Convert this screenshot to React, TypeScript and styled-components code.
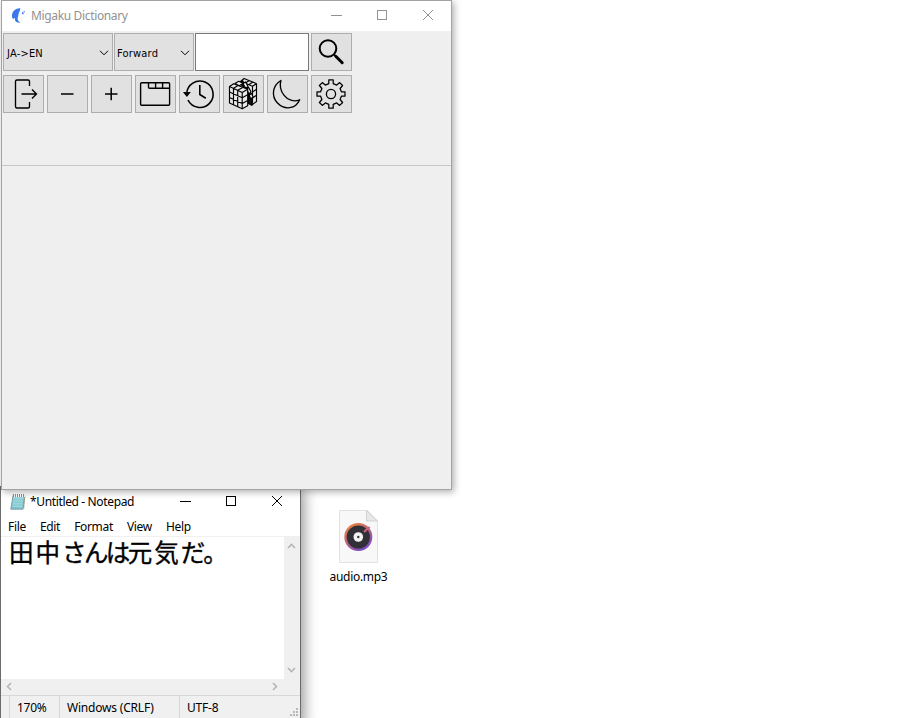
import React from "react";
import styled, { createGlobalStyle } from "styled-components";

const GlobalStyle = createGlobalStyle`
  * { box-sizing: border-box; }
  body { margin: 0; background: #fff; overflow: hidden; }
`;

const Desktop = styled.main`
  position: relative;
  width: 916px;
  height: 718px;
  overflow: hidden;
  background: #fff;
  color: #000;
  font-family: "Noto Sans", "Noto Sans CJK JP", sans-serif;
  font-size: 12px;
`;

const DictionaryWindow = styled.section`
  position: absolute;
  left: 1px;
  top: 0;
  z-index: 2;
  width: 451px;
  height: 490px;
  display: flex;
  flex-direction: column;
  border: 1px solid #a3a3a3;
  background: #efefef;
  box-shadow: 2px 2px 7px rgba(0, 0, 0, 0.32);
`;

const NotepadWindow = styled.section`
  position: absolute;
  left: 0;
  top: 486px;
  z-index: 1;
  width: 301px;
  height: 240px;
  display: flex;
  flex-direction: column;
  border: 1px solid #6b6b6b;
  background: #fff;
  box-shadow: 3px 3px 13px rgba(0, 0, 0, 0.42);
`;

const TitleBar = styled.header<{ $height: number; $color: string }>`
  flex: none;
  display: flex;
  align-items: center;
  height: ${(p) => p.$height}px;
  padding-left: 9px;
  background: #fff;
  color: ${(p) => p.$color};
`;

const Label = styled.span<{ $spacing?: number; $left?: number }>`
  margin-left: ${(p) => p.$left ?? 0}px;
  letter-spacing: ${(p) => p.$spacing ?? 0}px;
  line-height: 16px;
  white-space: pre;
`;

const Controls = styled.div`
  margin-left: auto;
  margin-right: 17px;
  padding-bottom: 2px;
  display: flex;
  gap: 34px;
`;

const Icon = styled.svg`
  display: block;
  flex: none;
  fill: none;
  stroke: currentColor;
`;

const Toolbar = styled.div`
  flex: none;
  height: 135px;
  padding: 2px 1px;
  display: flex;
  flex-direction: column;
  gap: 4px;
  border-bottom: 1px solid #c6c6c6;
`;

const ToolRow = styled.div<{ $gap: number }>`
  display: flex;
  height: 38px;
  gap: ${(p) => p.$gap}px;
`;

const Combo = styled.button<{ $width: number; $inset: number }>`
  display: flex;
  align-items: center;
  justify-content: space-between;
  width: ${(p) => p.$width}px;
  padding: 2px 3px 0 ${(p) => p.$inset}px;
  border: 1px solid #adadad;
  background: #e1e1e1;
  color: #000;
  font: 11px "DejaVu Sans Condensed", "DejaVu Sans", sans-serif;
  font-stretch: condensed;
  letter-spacing: 0.2px;
`;

const SearchInput = styled.input`
  width: 114px;
  margin-right: 1px;
  border: 1px solid #7a7a7a;
  border-radius: 0;
  background: #fff;
  outline: none;
`;

const ToolButton = styled.button`
  width: 41px;
  height: 38px;
  padding: 0;
  border: 1px solid #adadad;
  background: #e1e1e1;
  color: #000;
`;

const MenuBar = styled.nav`
  flex: none;
  display: flex;
  height: 21px;
  gap: 14px;
  padding: 3px 0 0 7px;
  border-bottom: 1px solid #f0f0f0;
`;

const Editor = styled.div`
  flex: none;
  display: flex;
  height: 142px;
`;

const Document = styled.div`
  flex: 1;
  padding: 0 0 0 8px;
  font-family: "Noto Sans CJK JP", sans-serif;
  font-size: 24.5px;
  line-height: 30px;
  white-space: nowrap;
  -webkit-text-stroke: 0.35px #000;
`;

const Glyphs = styled.span<{ $spacing: number }>`
  letter-spacing: ${(p) => p.$spacing}px;
`;

const VerticalScroll = styled.div`
  width: 16px;
  display: flex;
  flex-direction: column;
  justify-content: space-between;
  padding: 6px 0 6px 3px;
  background: #f0f0f0;
  color: #b5b5b5;
`;

const HorizontalScroll = styled.div`
  flex: none;
  height: 16px;
  display: flex;
  align-items: center;
  justify-content: space-between;
  padding: 0 22px 1px 5px;
  background: #f0f0f0;
  color: #b5b5b5;
`;

const StatusBar = styled.footer`
  flex: none;
  height: 24px;
  display: flex;
  background: #f0f0f0;
  border-top: 1px solid #d7d7d7;
`;

const StatusCell = styled.div<{ $width?: number }>`
  width: ${(p) => (p.$width ? `${p.$width}px` : "auto")};
  flex: ${(p) => (p.$width ? "none" : "1")};
  display: flex;
  align-items: center;
  justify-content: space-between;
  padding-left: 7px;
  border-left: 1px solid #d7d7d7;
`;

const StatusInset = styled.div`
  width: 8px;
`;

const DesktopFile = styled.div`
  position: absolute;
  left: 318px;
  top: 510px;
  width: 81px;
  display: flex;
  flex-direction: column;
  align-items: center;
  gap: 5px;
`;

function WindowControls() {
  return (
    <Controls>
      <Icon width="12" height="12"><path d="M1 6.5h11" /></Icon>
      <Icon width="12" height="12"><rect x="1.5" y="1.5" width="9" height="9" /></Icon>
      <Icon width="12" height="12"><path d="m1 1 10 10M11 1 1 11" /></Icon>
    </Controls>
  );
}

function Chevron({ d, w = 10, h = 6, stroke = 1 }: { d: string; w?: number; h?: number; stroke?: number }) {
  return <Icon width={w} height={h} strokeWidth={stroke}><path d={d} /></Icon>;
}

function ToolIcon({ children }: { children: React.ReactNode }) {
  return <Icon width="39" height="36" viewBox="1 1 39 36" strokeWidth="1.5">{children}</Icon>;
}

function ExitIcon() {
  return <ToolIcon><path d="M26.5 11V6.5q0-1.5-1.5-1.5H14q-1.5 0-1.5 1.5v25q0 1.5 1.5 1.5h11q1.5 0 1.5-1.5V27M18.5 19H33M29 14.5l4.5 4.5-4.5 4.5" strokeWidth="1.35" /></ToolIcon>;
}

function TabsIcon() {
  return <ToolIcon><rect x="5.6" y="7.7" width="29" height="22.5" rx="1" strokeWidth="1.4" /><path d="M13.5 8v4.2q0 1 1 1h20M20.6 8v5M27.6 8v5" strokeWidth="1.4" /></ToolIcon>;
}

function HistoryIcon() {
  return (
    <ToolIcon>
      <path d="M7.7 18.8A13.2 13.2 0 1 1 9 25M20.8 10v9.5l6 3.8" strokeWidth="1.6" />
      <path d="m5.5 17.8 2.4 3 2.4-3z" fill="currentColor" />
    </ToolIcon>
  );
}

function CubeIcon() {
  return (
    <ToolIcon>
      <g strokeWidth="1.15" strokeLinejoin="round">
        <path d="m17 7 4-3.5 12.5 5.2v17.8L28.8 30l-2.5-1.7V18z" fill="#e8e8e8" />
        <path d="m18 6.5 11.5 4.8 4-2.6M22 8.2l4-2.4M25.6 9.8l4-2.5M29.5 11.3v17.5M29.5 17l4-2.7M29.5 23l4-2.8" />
        <path d="m16.5 8.2 3.2-2.5 9.2 16.7v7.8l-3.5-1.7V16z" fill="#111" />
        <path d="m20 8.7 2.5-1.8 2.6 4.6-2.3 1.7zM23.3 14l2.4-1.5 2.4 4.5-2.2 1.8zM26.2 20l2.3-1.5 1.6 3.5-2.4 2z" fill="#eee" />
        <path d="m6.5 11.5 4.2-2.8 14 5.6v16.5l-5.5 3-12.7-5.9z" fill="#e8e8e8" />
        <path d="m6.5 11.5 12.7 6 5.5-3.2M19.2 17.5v16.3M10.5 13.3V30M14.7 15.3v16.6M6.5 17l12.7 5.8 5.5-3M6.5 22.5l12.7 5.9 5.5-3M10.5 13.3l4.6-2.7M14.7 15.3l5-2.8" />
        <path d="m12 8.5 3.7-2.2 4.5 2-3.9 2.4z" fill="#eee" />
      </g>
    </ToolIcon>
  );
}

function MoonIcon() {
  return <ToolIcon><path d="M13.9 5.5C5.5 10.5 3.9 21 10.5 28c7 7.2 18.2 6.4 22.2-3.2-6.1 2.5-12.1.1-15.6-4.4-3.6-4.6-4.8-9.4-3.2-14.9z" strokeWidth="1.35" strokeLinejoin="round" /></ToolIcon>;
}

function GearIcon() {
  return (
    <ToolIcon>
      <path d="M17.8 5.8h4.4v3.9l3.5 1.4 3-2.5 2.9 2.9-2.5 3 1.3 3.3H34v4.4h-3.6l-1.3 3.3 2.5 3-2.9 2.9-3-2.5-3.5 1.4v3.9h-4.4v-3.9l-3.5-1.4-3 2.5-2.9-2.9 2.5-3-1.3-3.3H6v-4.4h3.6l1.3-3.3-2.5-3 2.9-2.9 3 2.5 3.5-1.4z" strokeWidth="1.25" strokeLinejoin="round" transform="translate(0 -1)" />
      <circle cx="20" cy="19" r="4.6" strokeWidth="1.3" />
    </ToolIcon>
  );
}

function SearchIcon() {
  return <ToolIcon><circle cx="17" cy="15.5" r="8.3" strokeWidth="2" /><path d="m23.2 21.7 2 2" strokeWidth="2" /><path d="m25 23.5 6.2 6.2" strokeWidth="3" strokeLinecap="round" /></ToolIcon>;
}

function MigakuLogo() {
  return (
    <Icon width="16" height="18">
      <g stroke="none" fill="#3979eb">
        <path d="M9.3 1.2C5 .8 1.3 4 1 8.2c-.1 1.8.3 3 1.1 3.9.5-.8 1.2-1.2 1.8-1.2-.4 2.1.6 4 3.1 4.7.9.2 1.7.1 2.2-.2-2.1-1.1-3-2.8-2.4-5.1.3-1 .6-1.6.6-2.4 0-2.9 2.4-4.9 1.9-6.7z" />
        <path d="M11 5.1c1.5 0 2 .9 1.4 2.4-1.2-.1-1.8-.9-1.4-2.4z" /><circle cx="13.2" cy="4.7" r=".7" />
      </g>
    </Icon>
  );
}

function NotepadLogo() {
  return (
    <Icon width="16" height="18">
      <path d="M3 2.5h12l-2 13.7H.8z" fill="#79bfcb" stroke="#84a3aa" />
      <path d="m3.3 4-.9 10 9.5.5L13.8 4z" fill="#9bd7df" stroke="none" />
      <path d="M3 7h10M2.8 9.5h9.8M2.4 12h9.8" stroke="#75bac7" strokeWidth=".6" />
      <path d="M3 3h12" stroke="#fff" strokeWidth="2" /><path d="M3.5 1v3M5.5 1v3M7.5 1v3M9.5 1v3M11.5 1v3M13.5 1v3" stroke="#67777a" strokeWidth=".8" />
      <path d="m13.8 15.5.5-11" stroke="#b19168" strokeWidth=".7" />
    </Icon>
  );
}

function AudioIcon() {
  return (
    <Icon width="41" height="54">
      <defs>
        <linearGradient id="rim" x1="0" y1="0" x2=".6" y2="1"><stop stopColor="#f28a32" /><stop offset=".5" stopColor="#c26672" /><stop offset="1" stopColor="#794bc8" /></linearGradient>
      </defs>
      <path d="M1.5.5h28L39.5 11v41.5h-38z" fill="#f8f8f8" stroke="#e2e2e2" />
      <path d="M28.5.5V11h11z" fill="#e8e8e8" stroke="#d2d2d2" />
      <circle cx="20.3" cy="27" r="14" fill="url(#rim)" stroke="none" />
      <circle cx="20.3" cy="27" r="11.6" fill="#303036" stroke="none" />
      <circle cx="20.3" cy="27" r="4.8" fill="#f3f3f3" stroke="none" /><circle cx="20.3" cy="27" r="1.2" fill="#333" stroke="none" />
      <path d="m26 22 2.5-2.4 3.2-2.6" stroke="#c46575" strokeWidth="2.2" />
    </Icon>
  );
}

function ResizeGrip() {
  return (
    <Icon width="11" height="20">
      <path d="M7 10h2v2H7zM4 13h2v2H4zM7 13h2v2H7zM1 16h2v2H1zM4 16h2v2H4zM7 16h2v2H7z" fill="#b8b8b8" stroke="none" />
    </Icon>
  );
}

export default function App() {
  return (
    <Desktop>
      <GlobalStyle />
      <DictionaryWindow>
        <TitleBar $height={30} $color="#929292">
          <MigakuLogo />
          <Label $left={4} $spacing={-0.35}>Migaku Dictionary</Label>
          <WindowControls />
        </TitleBar>
        <Toolbar>
          <ToolRow $gap={1}>
            <Combo $width={110} $inset={3}>JA-&gt;EN<Chevron d="m1 .8 4 4 4-4" /></Combo>
            <Combo $width={80} $inset={2}>Forward<Chevron d="m1 .8 4 4 4-4" /></Combo>
            <SearchInput aria-label="Search" />
            <ToolButton aria-label="Search"><SearchIcon /></ToolButton>
          </ToolRow>
          <ToolRow $gap={3}>
            <ToolButton><ExitIcon /></ToolButton>
            <ToolButton><ToolIcon><path d="M14 19h12.5" /></ToolIcon></ToolButton>
            <ToolButton><ToolIcon><path d="M14 19h12.5M20.2 12.8v12.5" /></ToolIcon></ToolButton>
            <ToolButton><TabsIcon /></ToolButton>
            <ToolButton><HistoryIcon /></ToolButton>
            <ToolButton><CubeIcon /></ToolButton>
            <ToolButton><MoonIcon /></ToolButton>
            <ToolButton><GearIcon /></ToolButton>
          </ToolRow>
        </Toolbar>
      </DictionaryWindow>
      <NotepadWindow>
        <TitleBar $height={29} $color="#000">
          <NotepadLogo />
          <Label $left={4} $spacing={-0.36}>*Untitled - Notepad</Label>
          <WindowControls />
        </TitleBar>
        <MenuBar>
          {["File", "Edit", "Format", "View", "Help"].map((name) => <Label key={name} $spacing={-0.32}>{name}</Label>)}
        </MenuBar>
        <Editor>
          <Document>
            <Glyphs $spacing={2}>田中</Glyphs><Glyphs $spacing={-2.6}>さんは</Glyphs><Glyphs $spacing={2}>元気</Glyphs><Glyphs $spacing={-1.2}>だ。</Glyphs>
          </Document>
          <VerticalScroll>
            <Chevron d="m1 5 3.5-3.5L8 5" stroke={1.6} />
            <Chevron d="m1 1 3.5 3.5L8 1" stroke={1.6} />
          </VerticalScroll>
        </Editor>
        <HorizontalScroll>
          <Chevron d="M5 1 1.5 4.5 5 8" w={6} h={9} stroke={1.6} />
          <Chevron d="m1 1 3.5 3.5L1 8" w={6} h={9} stroke={1.6} />
        </HorizontalScroll>
        <StatusBar>
          <StatusInset />
          <StatusCell $width={50}><Label $spacing={-0.3}>170%</Label></StatusCell>
          <StatusCell $width={120}><Label $spacing={-0.2}>Windows (CRLF)</Label></StatusCell>
          <StatusCell><Label $spacing={-0.2}>UTF-8</Label><ResizeGrip /></StatusCell>
        </StatusBar>
      </NotepadWindow>
      <DesktopFile>
        <AudioIcon />
        <Label $spacing={-0.3}>audio.mp3</Label>
      </DesktopFile>
    </Desktop>
  );
}
